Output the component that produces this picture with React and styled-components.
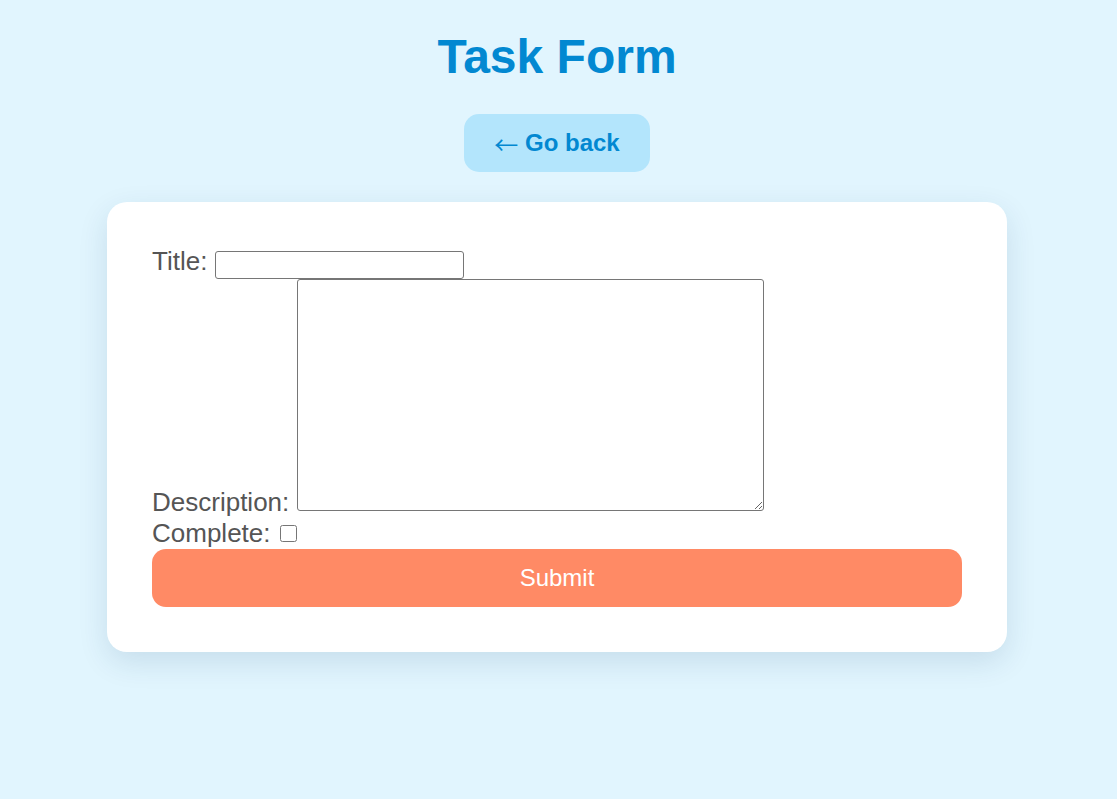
import styled, { createGlobalStyle } from 'styled-components'

const GlobalStyle = createGlobalStyle`
  html, body {
    margin: 0;
    padding: 0;
    background: #e1f5fe;
    font-family: "Liberation Sans", Arial, sans-serif;
  }
`

const Page = styled.div`
  min-height: 799px;
  padding: 29px 3px 0 0;
  display: flex;
  flex-direction: column;
  align-items: center;
  box-sizing: border-box;
`

const Heading = styled.h1`
  margin: 0;
  font-size: 48px;
  font-weight: bold;
  color: #0288d1;
`

const BackButton = styled.button`
  margin-top: 30px;
  padding: 15px 30px;
  border: none;
  border-radius: 15px;
  background: #b3e5fc;
  color: #0288d1;
  font-family: inherit;
  font-size: 24px;
  font-weight: bold;
  line-height: normal;
  cursor: pointer;
`

const Arrow = styled.span`
  font-family: "Noto Sans CJK SC", sans-serif;
  font-weight: normal;
  line-height: 0;
  vertical-align: -3px;
`

const Card = styled.div`
  margin-top: 30px;
  width: 900px;
  box-sizing: border-box;
  padding: 45px;
  background: #fff;
  border-radius: 20px;
  box-shadow: 0 10px 30px rgba(0, 60, 100, 0.12);
`

const Form = styled.form`
  color: #555;
  font-size: 26px;
  line-height: 29px;
`

const Label = styled.label`
  display: block;
  line-height: ${({ $lh }) => $lh || '29px'};
`

const TextInput = styled.input`
  width: 249px;
  height: 28px;
  box-sizing: border-box;
  border: 1px solid #767676;
  border-radius: 3px;
  font-size: 16px;
  padding: 1px 2px;
`

const TextArea = styled.textarea`
  width: 467px;
  height: 232px;
  box-sizing: border-box;
  border: 1px solid #767676;
  border-radius: 3px;
  margin: 0;
  vertical-align: baseline;
`

const Check = styled.input`
  width: 17px;
  height: 17px;
  margin: 3px 3px 2px 2px;
`

const SubmitButton = styled.button`
  display: block;
  width: 100%;
  margin-top: 0;
  padding: 15px;
  border: none;
  border-radius: 14px;
  background: #ff8a65;
  color: #fff;
  font-family: inherit;
  font-size: 24px;
  line-height: normal;
  cursor: pointer;
`

export default function App() {
  return (
    <>
      <GlobalStyle />
      <Page>
        <Heading>Task Form</Heading>
        <BackButton type="button">
          <Arrow>←</Arrow> Go back
        </BackButton>
        <Card>
          <Form onSubmit={(e) => e.preventDefault()}>
            <Label>
              Title: <TextInput type="text" />
            </Label>
            <Label>
              Description: <TextArea />
            </Label>
            <Label $lh="32px">
              Complete: <Check type="checkbox" />
            </Label>
            <SubmitButton type="submit">Submit</SubmitButton>
          </Form>
        </Card>
      </Page>
    </>
  )
}
